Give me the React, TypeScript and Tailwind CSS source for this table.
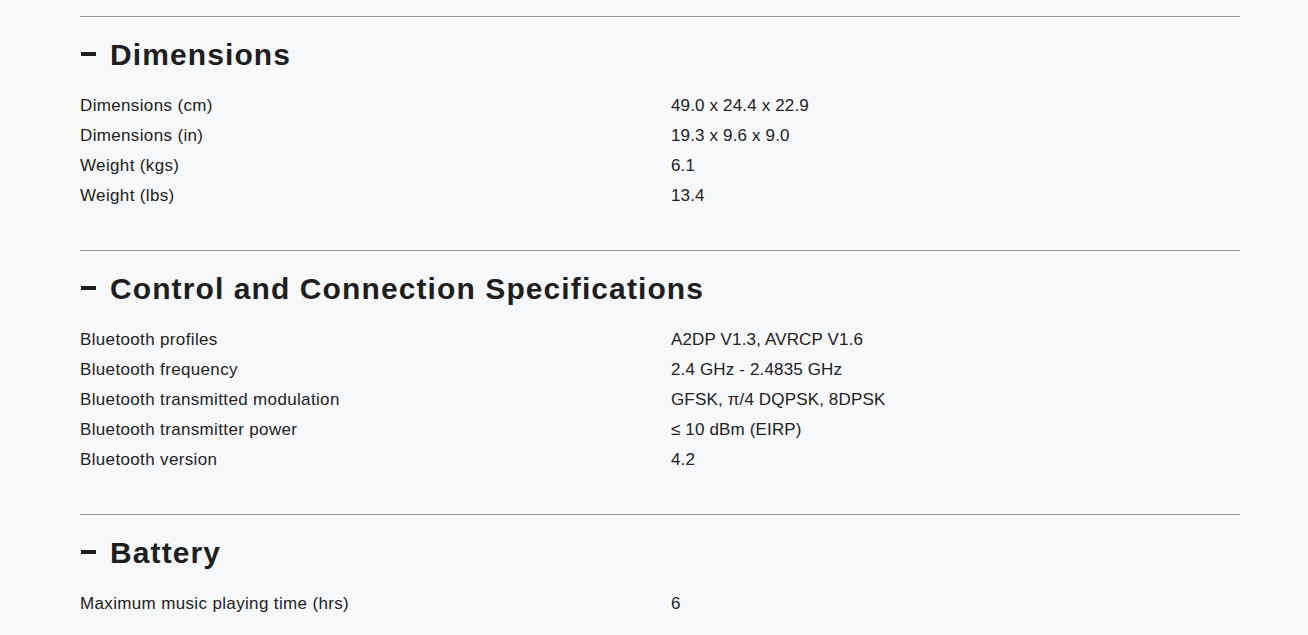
const sections = [
  {
    title: "Dimensions",
    rows: [
      ["Dimensions (cm)", "49.0 x 24.4 x 22.9"],
      ["Dimensions (in)", "19.3 x 9.6 x 9.0"],
      ["Weight (kgs)", "6.1"],
      ["Weight (lbs)", "13.4"],
    ],
  },
  {
    title: "Control and Connection Specifications",
    rows: [
      ["Bluetooth profiles", "A2DP V1.3, AVRCP V1.6"],
      ["Bluetooth frequency", "2.4 GHz - 2.4835 GHz"],
      ["Bluetooth transmitted modulation", "GFSK, π/4 DQPSK, 8DPSK"],
      ["Bluetooth transmitter power", "≤ 10 dBm (EIRP)"],
      ["Bluetooth version", "4.2"],
    ],
  },
  {
    title: "Battery",
    rows: [["Maximum music playing time (hrs)", "6"]],
  },
];

const SpecSection = ({ title, rows }: { title: string; rows: string[][] }) => (
  <section className="border-t border-[#999999] pb-[39px]">
    <h2 className="mt-[19px] mb-[19px] flex items-center h-[36px] text-[30px] font-bold tracking-[1.1px] text-[#1e1e1e]">
      <span className="inline-block w-[15px] h-[4px] bg-[#1e1e1e] ml-px mr-[14px]"></span>
      {title}
    </h2>
    <div>
      {rows.map(([label, value], i) => (
        <div key={i} className="grid grid-cols-[591px_1fr] text-[17px] leading-[30px] text-[#222222]">
          <span className="tracking-[0.35px]">{label}</span>
          <span className="tracking-[0.15px]">{value}</span>
        </div>
      ))}
    </div>
  </section>
);

export default function App() {
  return (
    <div className="min-h-screen bg-[#f7f8fa] pt-[16px] font-['Liberation_Sans',Arial,sans-serif]">
      <div className="mx-[80px] w-[1160px]">
        {sections.map((s, i) => (
          <SpecSection key={i} title={s.title} rows={s.rows} />
        ))}
      </div>
    </div>
  );
}
